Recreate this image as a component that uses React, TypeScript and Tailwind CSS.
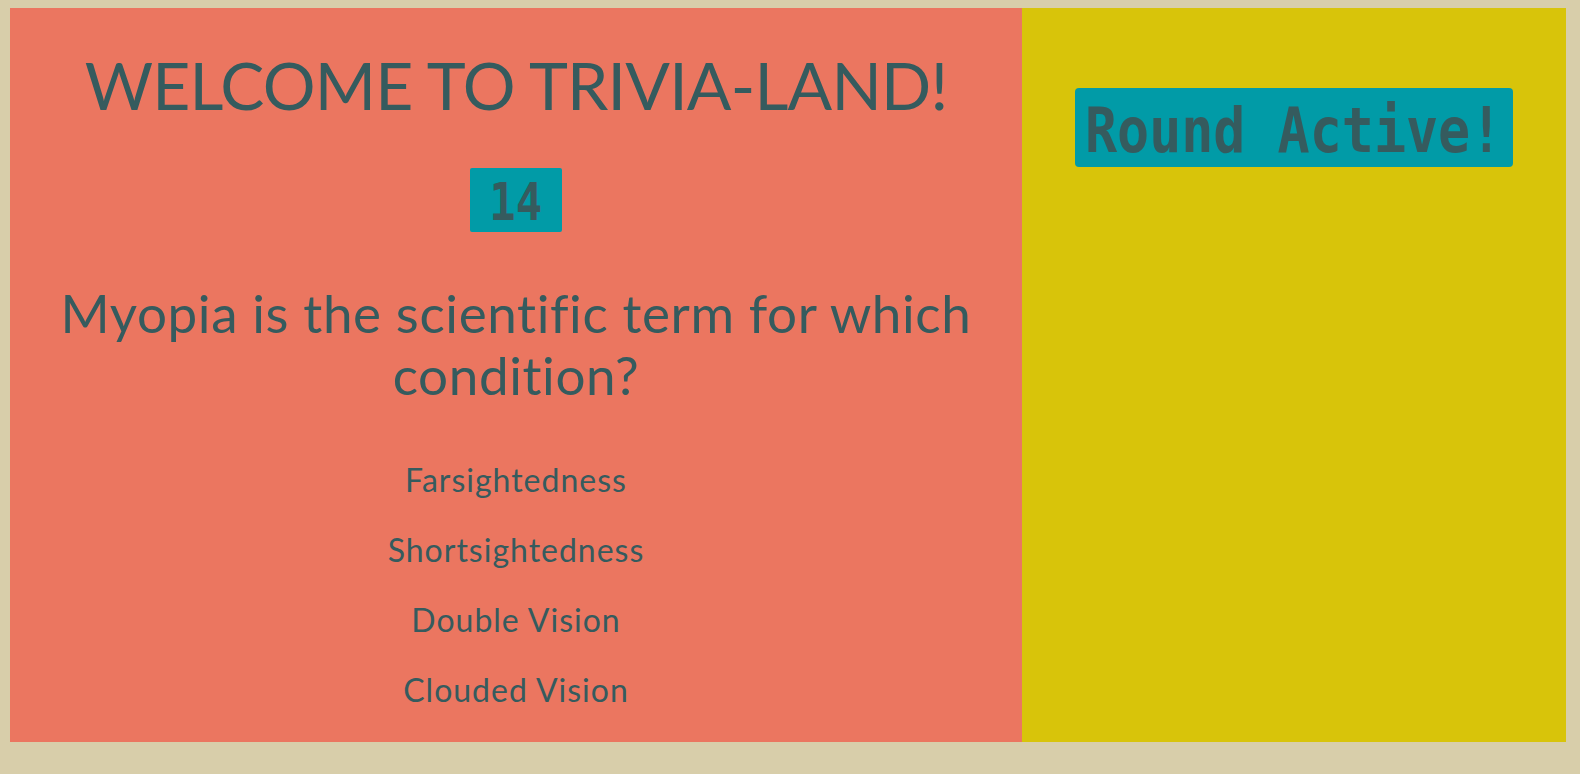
import React from "react";

const answers = ["Farsightedness", "Shortsightedness", "Double Vision", "Clouded Vision"];

export default function App() {
  return (
    <div className="min-h-screen bg-[#d8ceaa] pt-2 pl-[10px] pr-[14px] pb-[32px]">
      <div className="flex h-[734px]">
        {/* game panel */}
        <div className="w-[1012px] bg-[#eb7660] text-[#355b5e] flex flex-col items-center text-center pt-[37px] font-['Lato',sans-serif]">
          <h1 className="text-[66px] leading-[80px] font-normal tracking-[-0.8px]">WELCOME TO TRIVIA-LAND!</h1>
          <div className="mt-[43px] w-[92px] h-[64px] bg-[#019ba7] rounded-[2px] pt-[9px] font-['DejaVu_Sans_Mono',monospace] font-bold text-[51px] leading-[51px]">
            <span className="inline-block scale-x-[0.86]">14</span>
          </div>
          <h2 className="mt-[50px] max-w-[960px] text-[53px] leading-[62px] font-normal tracking-[0.6px]">
            Myopia is the scientific term for which condition?
          </h2>
          <ul className="mt-[55px] flex flex-col gap-[32px]">
            {answers.map((a) => (
              <li key={a} className="text-[32px] leading-[38px] tracking-[1px]">
                {a}
              </li>
            ))}
          </ul>
        </div>

        {/* status panel */}
        <div className="flex-1 bg-[#d8c40a] flex flex-col items-center pt-[80px]">
          <div className="w-[438px] h-[79px] bg-[#019ba7] rounded-[4px] pt-[12px] flex justify-center text-[#355b5e] font-['DejaVu_Sans_Mono',monospace] font-bold text-[62px] leading-[62px]">
            <span className="shrink-0 inline-block scale-x-[0.86] whitespace-nowrap">Round Active!</span>
          </div>
        </div>
      </div>
    </div>
  );
}
